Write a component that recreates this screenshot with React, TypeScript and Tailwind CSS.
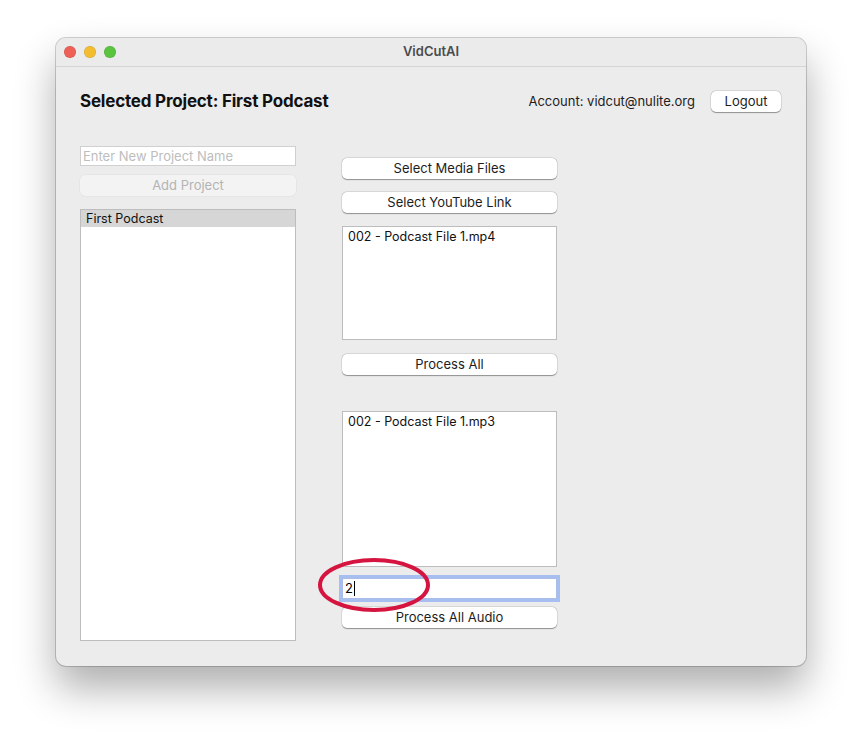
import React from 'react';

const font = { fontFamily: 'Inter, "Liberation Sans", sans-serif' };

const MacButton: React.FC<{ label: string; disabled?: boolean; className?: string }> = ({ label, disabled, className }) => (
    <button
        className={
            disabled
                ? `h-[21px] w-full shrink-0 rounded-[5px] bg-[#f3f3f3] text-[13px] text-[#b4b4b4] shadow-[0_0_0_0.5px_rgba(0,0,0,0.06)] ${className ?? ''}`
                : `h-[21px] w-full shrink-0 rounded-[5px] bg-white text-[13px] text-[#1d1d1d] shadow-[0_0.5px_1px_rgba(0,0,0,0.35),0_0_0_0.5px_rgba(0,0,0,0.12)] ${className ?? ''}`
        }
    >
        {label}
    </button>
);

export default function App() {
    return (
        <div className="min-h-[740px] bg-white pl-[56px] pt-[38px]" style={font}>
            <div className="relative w-[750px] h-[628px] rounded-[10px] bg-[#ececec] shadow-[0_22px_40px_rgba(0,0,0,0.32),0_0_0_1px_rgba(0,0,0,0.18)]">
                {/* Title bar */}
                <div className="relative flex h-[29px] items-center rounded-t-[10px] border-b border-[#d4d4d4] bg-[#ebebeb]">
                    <div className="flex gap-[8px] pl-[8px]">
                        <span className="h-[12px] w-[12px] rounded-full bg-[#ed5f57] shadow-[inset_0_0_0_0.5px_rgba(0,0,0,0.15)]" />
                        <span className="h-[12px] w-[12px] rounded-full bg-[#f4bd30] shadow-[inset_0_0_0_0.5px_rgba(0,0,0,0.15)]" />
                        <span className="h-[12px] w-[12px] rounded-full bg-[#5ac43f] shadow-[inset_0_0_0_0.5px_rgba(0,0,0,0.15)]" />
                    </div>
                    <div className="absolute inset-0 flex items-center justify-center text-[13px] font-semibold text-[#4c4c4c]">
                        VidCutAI
                    </div>
                </div>

                <div className="px-[24px] pt-[24px]">
                    {/* Header */}
                    <div className="flex h-[21px] items-center justify-between">
                        <h1 className="text-[17px] font-bold tracking-[-0.2px] text-[#111]">Selected Project: First Podcast</h1>
                        <div className="flex shrink-0 items-center gap-[16px] pr-px">
                            <span className="whitespace-nowrap text-[13px] text-[#1d1d1d]">Account: vidcut@nulite.org</span>
                            <MacButton label="Logout" className="!w-[70px]" />
                        </div>
                    </div>

                    <div className="flex gap-[46px]">
                        {/* Left column */}
                        <div className="mt-[34px] flex w-[216px] flex-col">
                            <input
                                readOnly
                                placeholder="Enter New Project Name"
                                className="h-[20px] w-full border border-[#d0d0d0] bg-white px-[2px] text-[13px] placeholder:text-[#bdbdbd] outline-none"
                            />
                            <MacButton label="Add Project" disabled className="mt-[9px]" />
                            <div className="mt-[13px] h-[432px] border border-[#bdbdbd] bg-white">
                                <div className="h-[17px] bg-[#d6d6d6] pl-[5px] text-[12.5px] leading-[17px] text-[#111]">First Podcast</div>
                            </div>
                        </div>

                        {/* Middle column */}
                        <div className="mt-[46px] flex w-[215px] flex-col">
                            <MacButton label="Select Media Files" />
                            <MacButton label="Select YouTube Link" className="mt-[13px]" />
                            <div className="mt-[13px] h-[114px] border border-[#bdbdbd] bg-white px-[5px] pt-[1px] text-[12.5px] text-[#111]">
                                002 - Podcast File 1.mp4
                            </div>
                            <MacButton label="Process All" className="mt-[14px]" />
                            <div className="mt-[36px] h-[156px] border border-[#bdbdbd] bg-white px-[5px] pt-[1px] text-[12.5px] text-[#111]">
                                002 - Podcast File 1.mp3
                            </div>
                            <div className="mt-[11px] flex h-[21px] items-center border border-[#a9bde8] bg-white pl-[2px] text-[13px] text-black shadow-[0_0_0_3px_#a6bff0]">
                                2<span className="ml-px h-[15px] w-px bg-black" />
                            </div>
                            <MacButton label="Process All Audio" className="mt-[8px]" />
                        </div>
                    </div>
                </div>

                {/* Annotation ellipse */}
                <svg className="pointer-events-none absolute left-[260px] top-[517px]" width="116" height="60" viewBox="0 0 116 60">
                    <ellipse cx="58" cy="30" rx="54" ry="25" fill="none" stroke="#d5143f" strokeWidth="4" />
                </svg>
            </div>
        </div>
    );
}
